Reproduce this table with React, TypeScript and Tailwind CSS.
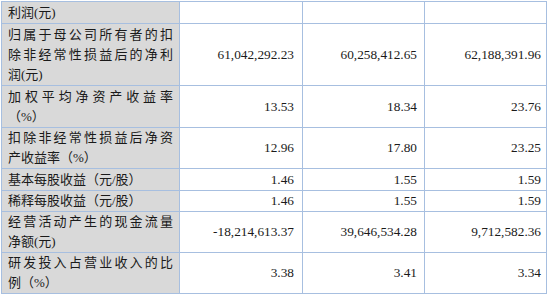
type Row = {
  label: string[];
  values: string[];
  h: string;
};

const rows: Row[] = [
  { label: ["利润(元)"], values: ["", "", ""], h: "h-[22px]" },
  {
    label: ["归属于母公司所有者的扣", "除非经常性损益后的净利", "润(元)"],
    values: ["61,042,292.23", "60,258,412.65", "62,188,391.96"],
    h: "h-[62px]",
  },
  { label: ["加权平均净资产收益率", "（%）"], values: ["13.53", "18.34", "23.76"], h: "h-[42px]" },
  { label: ["扣除非经常性损益后净资", "产收益率（%）"], values: ["12.96", "17.80", "23.25"], h: "h-[41px]" },
  { label: ["基本每股收益（元/股）"], values: ["1.46", "1.55", "1.59"], h: "h-[22px]" },
  { label: ["稀释每股收益（元/股）"], values: ["1.46", "1.55", "1.59"], h: "h-[21px]" },
  {
    label: ["经营活动产生的现金流量", "净额(元)"],
    values: ["-18,214,613.37", "39,646,534.28", "9,712,582.36"],
    h: "h-[41px]",
  },
  { label: ["研发投入占营业收入的比", "例（%）"], values: ["3.38", "3.41", "3.34"], h: "h-[41px]" },
];

const padRight = ["pr-[8px]", "pr-[7px]", "pr-[5px]"];

export default function App() {
  return (
    <div className="h-[298px] w-[550px] overflow-hidden bg-white pl-[1px] pt-[1px] font-['Liberation_Serif','Noto_Sans_CJK_SC',serif] text-[#1a1a1a]">
      <table className="w-[545px] table-fixed border-collapse">
        <colgroup>
          <col className="w-[178px]" />
          <col className="w-[123px]" />
          <col className="w-[122px]" />
          <col className="w-[122px]" />
        </colgroup>
        <tbody>
          {rows.map((r, i) => (
            <tr key={i} className={r.h}>
              {/* label column */}
              <td className="border border-[#a7bfe0] bg-[#d9d9d9] px-[6px] py-0 align-middle text-[13px] leading-[20px]">
                {r.label.map((line, j) => (
                  <div
                    key={j}
                    className={
                      j < r.label.length - 1
                        ? "h-[20px] overflow-visible text-justify [text-align-last:justify] [text-justify:inter-character]"
                        : "h-[20px] overflow-visible text-left"
                    }
                  >
                    {line}
                  </div>
                ))}
              </td>
              {r.values.map((v, k) => (
                <td
                  key={k}
                  className={`border border-[#a7bfe0] py-0 pl-1 text-right align-middle text-[13.3px] leading-[20px] ${padRight[k]}`}
                >
                  {v}
                </td>
              ))}
            </tr>
          ))}
        </tbody>
      </table>
    </div>
  );
}
